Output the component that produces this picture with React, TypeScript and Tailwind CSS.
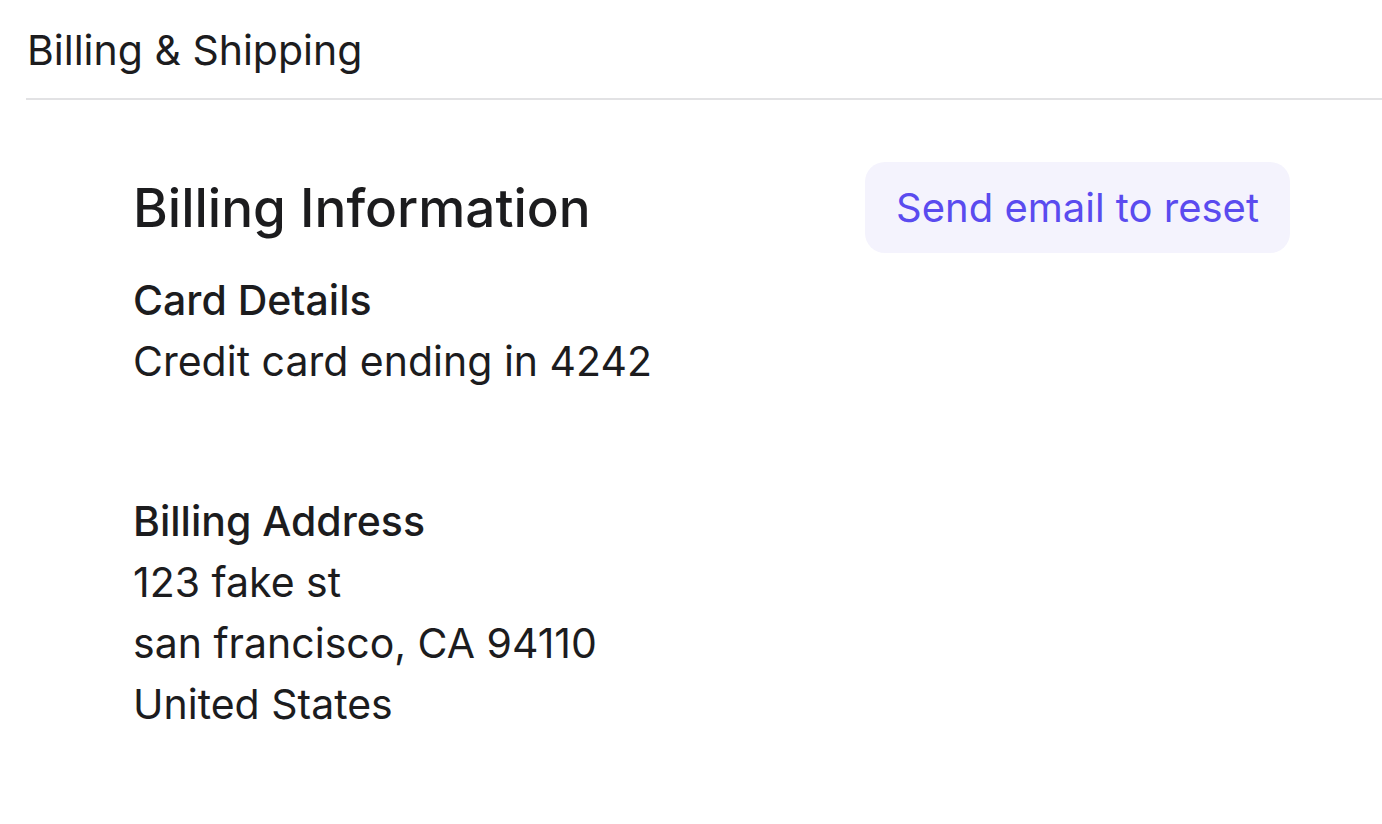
import React from 'react';

const App: React.FC = () => {
    return (
        <div className="min-h-screen bg-white text-[#1c1c1e]" style={{ fontFamily: 'Inter, "Noto Sans", sans-serif' }}>
            <div className="pl-[26px]">
                <h1 className="pl-px pt-[25px] pb-[23px] text-[41px] leading-[50px] font-normal">Billing &amp; Shipping</h1>
                <div className="h-[2px] bg-[#e2e2e4]" />
            </div>
            <div className="pl-[133px] pr-[92px] pt-[62px]">
                <div className="flex items-center justify-between">
                    <h2 className="text-[53px] leading-[90px] font-medium">Billing Information</h2>
                    <button className="h-[91px] px-[31px] rounded-[20px] bg-[#f4f3fd] text-[#5a4bef] text-[40px]">
                        Send email to reset
                    </button>
                </div>
                <div className="mt-[17px] text-[41px] leading-[61px]">
                    <p className="font-medium">Card Details</p>
                    <p>Credit card ending in 4242</p>
                </div>
                <div className="mt-[99px] text-[41px] leading-[61px]">
                    <p className="font-medium">Billing Address</p>
                    <p>123 fake st</p>
                    <p>san francisco, CA 94110</p>
                    <p>United States</p>
                </div>
            </div>
        </div>
    );
};

export default App;
